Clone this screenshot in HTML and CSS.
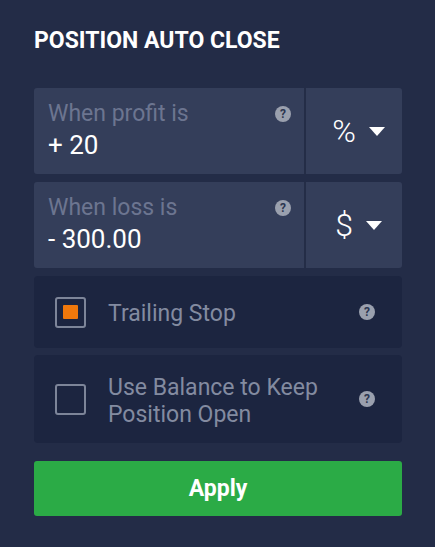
FILE: index.html
```html
<!DOCTYPE html>
<html>
<head>
<meta charset="utf-8">
<link rel="stylesheet" href="styles.css">
</head>
<body>
<div class="panel">
  <h1 class="title">POSITION AUTO CLOSE</h1>
  <div class="field">
    <div class="field-main">
      <div class="field-label">When profit is</div>
      <div class="field-value">+ 20</div>
      <span class="help help-field">?</span>
    </div>
    <div class="field-unit"><span class="unit">%</span><span class="caret"></span></div>
  </div>
  <div class="field">
    <div class="field-main">
      <div class="field-label">When loss is</div>
      <div class="field-value">- 300.00</div>
      <span class="help help-field">?</span>
    </div>
    <div class="field-unit"><span class="unit">$</span><span class="caret"></span></div>
  </div>
  <div class="option option-short">
    <span class="check"><span class="check-mark"></span></span>
    <span class="option-text">Trailing Stop</span>
    <span class="help">?</span>
  </div>
  <div class="option option-tall">
    <span class="check"></span>
    <span class="option-text">Use Balance to Keep<br>Position Open</span>
    <span class="help">?</span>
  </div>
  <button class="apply">Apply</button>
</div>
</body>
</html>
```
FILE: styles.css
```css
html, body {
  margin: 0;
  padding: 0;
  background: #232c47;
  width: 435px;
  height: 547px;
  overflow: hidden;
}
.panel {
  padding: 25px 33px 0 34px;
  font-family: Roboto, "Liberation Sans", sans-serif;
  display: flex;
  flex-direction: column;
}
.title {
  margin: 0 0 31px 0;
  font-size: 23px;
  font-weight: 700;
  color: #ffffff;
  line-height: 32px;
}
.field {
  display: flex;
  height: 86px;
  background: #343e5a;
  border-radius: 3px;
  margin-bottom: 8px;
}
.field-main {
  position: relative;
  flex: 1;
  padding: 12px 0 0 14px;
  border-right: 2px solid #242d47;
}
.field-label {
  font-size: 23px;
  line-height: 28px;
  color: #6c7590;
}
.field-value {
  font-size: 26px;
  line-height: 30px;
  color: #ffffff;
  margin-top: 2px;
}
.help {
  width: 16px;
  height: 16px;
  border-radius: 50%;
  background: #9aa0ae;
  color: #2c3550;
  font-size: 12px;
  font-weight: 700;
  line-height: 16px;
  text-align: center;
  flex: none;
}
.help-field {
  position: absolute;
  left: 241px;
  top: 18px;
}
.field-unit {
  width: 96px;
  display: flex;
  align-items: center;
  justify-content: center;
  gap: 13px;
  padding-left: 9px;
  box-sizing: border-box;
}
.unit {
  font-size: 32px;
  font-weight: 300;
  color: #ffffff;
  line-height: 34px;
}
.caret {
  width: 0;
  height: 0;
  border-left: 8px solid transparent;
  border-right: 8px solid transparent;
  border-top: 9px solid #ffffff;
}
.option {
  display: flex;
  align-items: center;
  background: #1c2540;
  border-radius: 4px;
  padding: 0 27px 0 21px;
}
.option-short {
  height: 72px;
  margin-bottom: 7px;
}
.option-tall {
  height: 88px;
  margin-bottom: 18px;
}
.check {
  width: 31px;
  height: 31px;
  box-sizing: border-box;
  border: 2px solid #7d8599;
  border-radius: 3px;
  display: flex;
  align-items: center;
  justify-content: center;
  flex: none;
}
.check-mark {
  width: 15px;
  height: 14px;
  background: #f0780c;
  border-radius: 1px;
}
.option-text {
  flex: 1;
  margin-left: 22px;
  font-size: 23px;
  line-height: 27px;
  color: #838ba0;
  padding-top: 3px;
}
.apply {
  height: 55px;
  border: none;
  border-radius: 3px;
  background: #2bab46;
  color: #ffffff;
  font-family: Roboto, "Liberation Sans", sans-serif;
  font-size: 23px;
  font-weight: 700;
  padding: 0;
  width: 100%;
}
```
